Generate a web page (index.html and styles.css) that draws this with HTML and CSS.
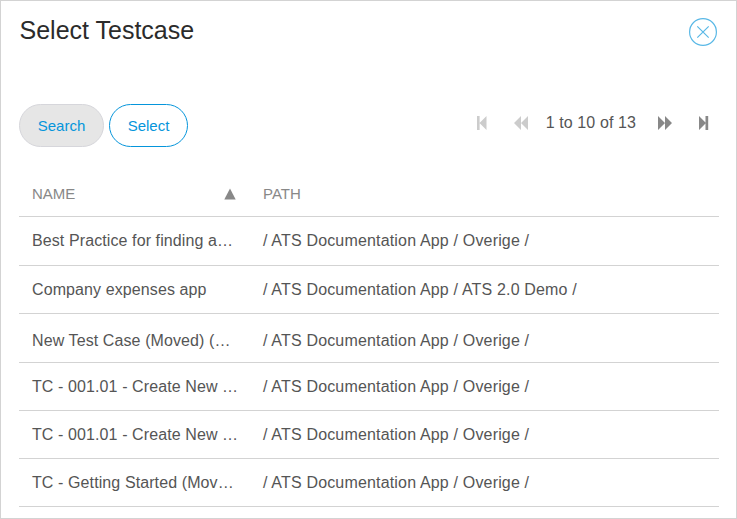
FILE: index.html
```html
<!DOCTYPE html>
<html lang="en">
<head>
<meta charset="utf-8">
<title>Select Testcase</title>
<link rel="stylesheet" href="styles.css">
</head>
<body>
<main class="dialog">
  <header class="header">
    <h1 class="title">Select Testcase</h1>
    <button class="close" aria-label="Close">
      <svg width="30" height="30" viewBox="0 0 30 30" fill="none" stroke="#59b8e6" stroke-width="1.2"><circle cx="15" cy="15" r="13.4"/><path d="M9.3 9.3l11.4 11.4M20.7 9.3l-11.4 11.4"/></svg>
    </button>
  </header>
  <div class="toolbar">
    <div class="actions">
      <button class="btn btn-search">Search</button>
      <button class="btn btn-select">Select</button>
    </div>
    <nav class="pager">
      <svg class="icon off" width="10" height="14" viewBox="0 0 10 14"><path d="M0 0h2.6v14H0zM9.5 0v14L2.5 7z"/></svg>
      <svg class="icon off prev" width="14" height="14" viewBox="0 0 14 14"><path d="M7 0v14L0 7zM14 0v14L7 7z"/></svg>
      <span class="count">1 to 10 of 13</span>
      <svg class="icon next" width="14" height="14" viewBox="0 0 14 14"><path d="M0 0v14l7-7zM7 0v14l7-7z"/></svg>
      <svg class="icon last" width="10" height="14" viewBox="0 0 10 14"><path d="M0 0v14l7-7zM6.5 0h2.7v14H6.5z"/></svg>
    </nav>
  </div>
  <table class="grid">
    <colgroup><col class="col-name"><col></colgroup>
    <thead><tr><th><div class="sort">NAME<svg width="12" height="12" viewBox="0 0 12 12"><path d="M6 0.5l5.7 11H0.3z"/></svg></div></th><th>PATH</th></tr></thead>
    <tbody>
      <tr class="tall"><td>Best Practice for finding a…</td><td>/ ATS Documentation App / Overige /</td></tr>
      <tr><td>Company expenses app</td><td>/ ATS Documentation App / ATS 2.0 Demo /</td></tr>
      <tr class="tall low"><td>New Test Case (Moved) (…</td><td>/ ATS Documentation App / Overige /</td></tr>
      <tr><td>TC - 001.01 - Create New …</td><td>/ ATS Documentation App / Overige /</td></tr>
      <tr><td>TC - 001.01 - Create New …</td><td>/ ATS Documentation App / Overige /</td></tr>
      <tr><td>TC - Getting Started (Mov…</td><td>/ ATS Documentation App / Overige /</td></tr>
    </tbody>
  </table>
</main>
</body>
</html>
```
FILE: styles.css
```css
* { box-sizing: border-box; }
body { margin: 0; font-family: "Liberation Sans", Arial, sans-serif; font-size: 16px; color: #555; background: #fff; }
.dialog { height: 519px; border: 1px solid #d3d3d3; padding: 0 18px; overflow: hidden; }
.header { display: flex; justify-content: space-between; height: 103px; padding-top: 13px; }
.title { margin: 0; padding-left: 0.5px; font-size: 25px; line-height: 32px; font-weight: 400; color: #2b2b2b; }
.close { width: 30px; height: 30px; padding: 0; margin: 3px 0 0; border: 0; background: none; }
.close svg { display: block; }
.toolbar { display: flex; justify-content: space-between; height: 68px; }
.actions { display: flex; gap: 5px; }
.btn { height: 43px; padding: 0; border-radius: 22px; font: 15px "Liberation Sans", Arial, sans-serif; color: #0595db; }
.btn-search { width: 85px; border: 1px solid #d6d6db; background: #e6e6e6; }
.btn-select { width: 79px; border: 1px solid #0595db; background: #fff; }
.pager { display: flex; align-items: center; height: 38px; padding-right: 9px; }
.icon { fill: #888; }
.off { fill: #ccc; }
.prev { margin-left: 27px; }
.next { margin-left: 22px; }
.last { margin-left: 27px; }
.count { margin-left: 18px; line-height: 18px; margin-bottom: 1px; letter-spacing: 0.1px; }
.grid { width: 700px; border-collapse: separate; border-spacing: 0; table-layout: fixed; }
.col-name { width: 231px; }
.grid th, .grid td { height: 48px; padding: 0 0 0 13px; border-bottom: 1px solid #d3d3d3; text-align: left; font-weight: 400; white-space: nowrap; letter-spacing: 0.1px; }
.grid td + td { letter-spacing: 0.17px; }
.grid th { height: 45px; padding-bottom: 2px; font-size: 15px; color: #888; letter-spacing: 0; }
.grid .tall td { height: 49px; }
.grid .low td { padding-top: 5px; }
.sort { display: flex; align-items: center; justify-content: space-between; padding-right: 14px; }
.sort svg { fill: #888; margin-top: 2px; }
```
